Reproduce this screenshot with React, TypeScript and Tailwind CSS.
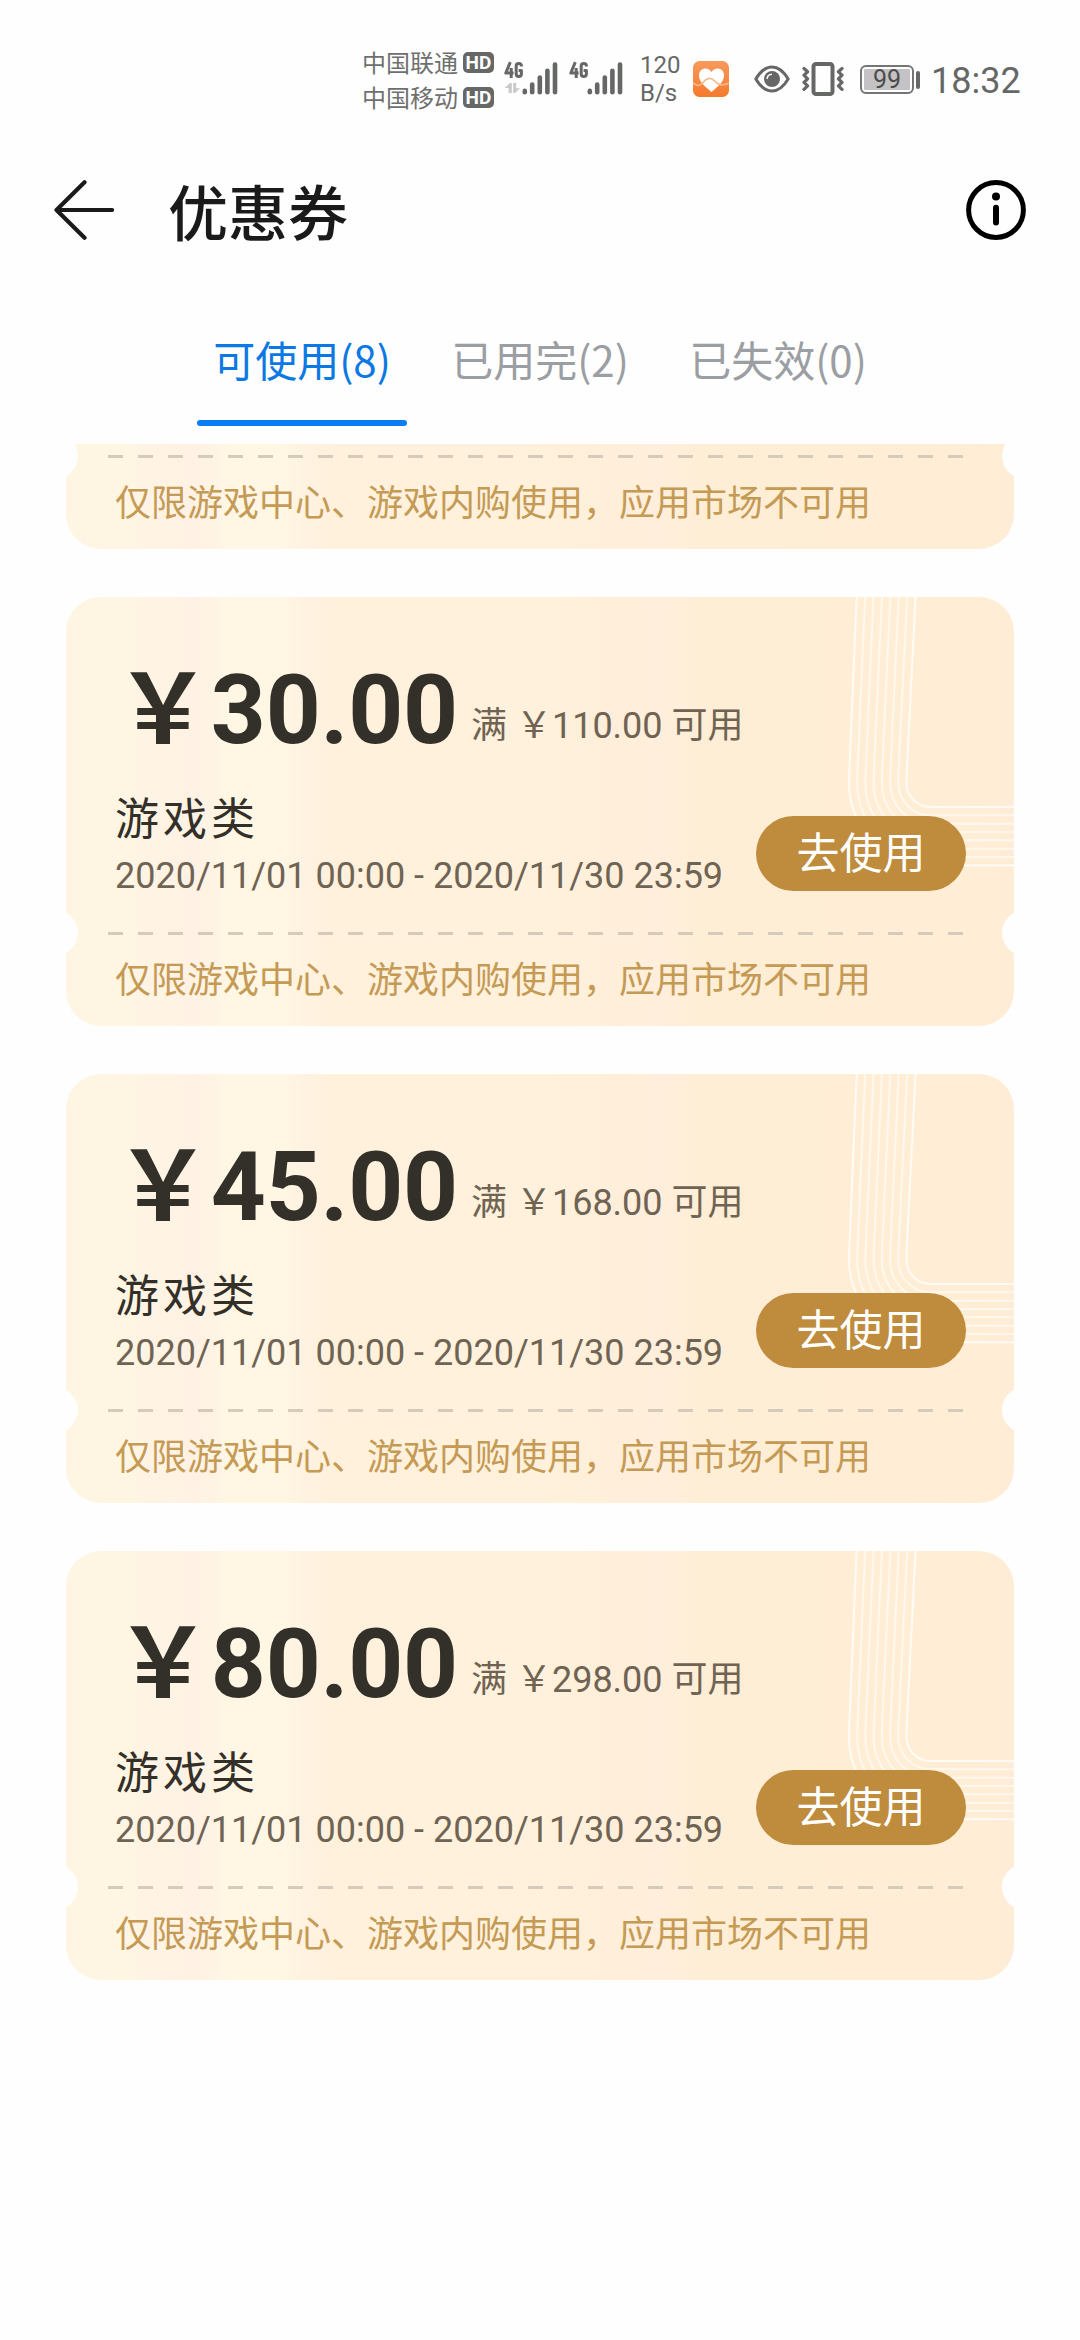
import React from "react";

const NOTE = "仅限游戏中心、游戏内购使用，应用市场不可用";

const coupons = [
  { amount: "30.00", min: "110.00" },
  { amount: "45.00", min: "168.00" },
  { amount: "80.00", min: "298.00" },
];

const tabs = [
  { label: "可使用(8)", active: true },
  { label: "已用完(2)", active: false },
  { label: "已失效(0)", active: false },
];

function HdBadge() {
  return (
    <span className="flex h-[21px] w-[31px] items-center justify-center rounded-[5px] bg-[#666866] font-['Roboto',sans-serif] text-[19px] leading-[21px] font-bold text-white">
      HD
    </span>
  );
}

function Carrier({ name }: { name: string }) {
  return (
    <div className="flex h-[35px] items-center gap-[5px]">
      <span className="-mt-[2px] w-[96px] text-[24px] leading-[35px] whitespace-nowrap text-[#6e706e]">{name}</span>
      <HdBadge />
    </div>
  );
}

function Signal({ data }: { data: boolean }) {
  return (
    <svg width="54" height="36" viewBox="0 0 54 36" className="shrink-0">
      <g fill="none" stroke="#666866" strokeWidth="3" strokeLinejoin="round">
        <path d="M6.3 1.2 L1.8 12 H9.6 M7.2 7 V17" />
        <path d="M17.4 5.6 V5 Q17.4 2.4 14.8 2.4 Q12.2 2.4 12.2 5 V13 Q12.2 15.6 14.8 15.6 Q17.4 15.6 17.4 13 V9.6 H14.6" />
      </g>
      {data && (
        <g fill="#c9c9c9">
          <path d="M0.5 27 L6 22 H7.8 V32 H4.6 V27 Z" />
          <path d="M9.2 22 H12.2 V27.2 H16 L11 32 H9.2 Z" />
        </g>
      )}
      <g stroke="#666866" strokeWidth="4.6" strokeLinecap="round">
        <path d="M20.8 29.9V31.2" />
        <path d="M28.2 23.6V31.2" />
        <path d="M35.8 16.6V31.2" />
        <path d="M43.4 9.8V31.2" />
        <path d="M51 3.6V31.2" />
      </g>
    </svg>
  );
}

function HealthIcon() {
  return (
    <svg width="36" height="36" viewBox="0 0 36 36" className="shrink-0">
      <defs>
        <linearGradient id="health" x1="0" y1="0" x2="0" y2="1">
          <stop offset="0" stopColor="#f79a5c" />
          <stop offset="1" stopColor="#f57a2c" />
        </linearGradient>
      </defs>
      <rect width="36" height="36" rx="6.5" fill="url(#health)" />
      <path
        d="M18.5 31 C13 26 6 21.5 6 14.5 C6 10 9.2 7.5 12.5 7.5 C15 7.5 17.2 8.8 18.5 11 C19.8 8.8 22 7.5 24.8 7.5 C28.5 7.5 31 10.5 31 14.5 C31 21.5 24 26 18.5 31Z"
        fill="#fff"
      />
      <path d="M0 22 C4 25 7 25.5 10 21.5 C14 16.5 18 16 21.5 20 C25 24 30 25 36 22" fill="none" stroke="#f9b98c" strokeWidth="1.8" />
    </svg>
  );
}

function EyeIcon() {
  return (
    <svg width="36" height="28" viewBox="0 0 36 28" className="shrink-0">
      <path d="M1.8 14 Q9 2 18 2 Q27 2 34.2 14 Q27 26 18 26 Q9 26 1.8 14Z" fill="none" stroke="#666866" strokeWidth="3" strokeLinejoin="round" />
      <circle cx="18" cy="14" r="8" fill="#666866" />
      <path d="M13.2 14 Q13.2 9.3 18 9.2" fill="none" stroke="#fff" strokeWidth="1.6" />
    </svg>
  );
}

function VibrateIcon() {
  return (
    <svg width="42" height="34" viewBox="0 0 42 34" className="shrink-0" fill="none" stroke="#666866">
      <rect x="11.5" y="2" width="19" height="30" rx="2.5" strokeWidth="4" />
      <path d="M2 6.5 L5.6 9.8 L2 13.2 L5.6 16.8 L2 20.4 L5.6 23.8 L2 27.4" strokeWidth="3.2" strokeLinecap="round" strokeLinejoin="round" />
      <path d="M40 6.5 L36.4 9.8 L40 13.2 L36.4 16.8 L40 20.4 L36.4 23.8 L40 27.4" strokeWidth="3.2" strokeLinecap="round" strokeLinejoin="round" />
    </svg>
  );
}

function Battery() {
  return (
    <div className="flex items-center gap-[2px]">
      <div className="flex h-[29px] w-[54px] rounded-[6px] border-2 border-[#747674] p-[2px]">
        <div className="flex flex-1 items-center justify-center rounded-[1px] bg-[#c4c2c4] font-['Roboto',sans-serif] text-[25px] leading-[21px] text-[#4c4c4c]">
          99
        </div>
      </div>
      <div className="h-[18px] w-[4px] rounded-[2px] bg-[#666866]" />
    </div>
  );
}

function StatusBar() {
  return (
    <div className="flex h-[134px] items-start pt-[45px] pl-[362px]">
      <div>
        <Carrier name="中国联通" />
        <Carrier name="中国移动" />
      </div>
      <div className="mt-[16px] ml-[10px] flex gap-[11px]">
        <Signal data />
        <Signal data={false} />
      </div>
      <div className="mt-[6px] ml-[17px] w-[52px] font-['Roboto',sans-serif] text-[24px] leading-[28px] text-[#666866]">
        <div>120</div>
        <div>B/s</div>
      </div>
      <div className="mt-[16px] ml-px">
        <HealthIcon />
      </div>
      <div className="mt-[20px] ml-[25px]">
        <EyeIcon />
      </div>
      <div className="mt-[17px] ml-[12px]">
        <VibrateIcon />
      </div>
      <div className="mt-[20px] ml-[16px]">
        <Battery />
      </div>
      <div className="mt-[18px] ml-[11px] font-['Roboto',sans-serif] text-[36px] leading-[36px] text-[#666866]">18:32</div>
    </div>
  );
}

function Header() {
  return (
    <header className="flex h-[152px] items-center px-[54px]">
      <svg width="60" height="60" viewBox="0 0 60 60" fill="none" stroke="#1a1a1a" strokeWidth="4.2" strokeLinecap="round" strokeLinejoin="round">
        <path d="M30.5 2.3 L2.5 30 L30.5 57.7 M2.5 30 H58" />
      </svg>
      <h1 className="ml-[54px] flex-1 text-[60px] leading-[90px] font-medium text-[#1a1a1a]">优惠券</h1>
      <svg width="60" height="60" viewBox="0 0 60 60" fill="none" stroke="#000">
        <circle cx="30" cy="30" r="27.4" strokeWidth="5" />
        <circle cx="30" cy="16.5" r="4" fill="#000" stroke="none" />
        <path d="M30 27.8 V42.6" strokeWidth="6" strokeLinecap="round" />
      </svg>
    </header>
  );
}

function Tabs() {
  return (
    <nav className="flex h-[158px] justify-center gap-[28px]">
      {tabs.map((t) => (
        <div key={t.label} className="flex w-[210px] flex-col items-center">
          <span
            className={
              t.active
                ? "mt-[42px] text-[42px] leading-[62px] whitespace-nowrap text-[#0b78e3]"
                : "mt-[42px] text-[42px] leading-[62px] whitespace-nowrap text-[#9b9ea2]"
            }
          >
            {t.label}
          </span>
          {t.active && <span className="mt-[30px] h-[6px] w-full rounded-[3px] bg-[#0a7df5]" />}
        </div>
      ))}
    </nav>
  );
}

function CardLines() {
  return (
    <svg width="948" height="429" viewBox="0 0 948 429" className="absolute top-0 left-0" fill="none" stroke="#fff" strokeWidth="2">
      {Array.from({ length: 8 }, (_, i) => {
        const rx = 24 + i * 8.22;
        const ry = 24 + i * 8.33;
        const x = 864.5 - rx;
        return (
          <path
            key={i}
            strokeOpacity={i === 0 || i === 7 ? 0.75 : 0.6}
            d={`M${849.5 - i * 8.4} 0 L${x + 0.5} 170 Q${x} 178 ${x} 186 A${rx} ${ry} 0 0 0 864.5 ${186 + ry} H948`}
          />
        );
      })}
    </svg>
  );
}

function Notches() {
  return (
    <>
      <div className="absolute bottom-[70px] -left-[34px] size-[46px] rounded-full bg-[#fefefe]" />
      <div className="absolute -right-[34px] bottom-[70px] size-[46px] rounded-full bg-[#fefefe]" />
    </>
  );
}

function CardFooter() {
  return (
    <>
      <div className="flex h-[3px] gap-[15px] pl-[42px]">
        {Array.from({ length: 29 }, (_, i) => (
          <span key={i} className="h-[3px] w-[15px] bg-[#d6cabb]" />
        ))}
      </div>
      <p className="mt-[20px] pl-[49px] font-['Roboto','Noto_Sans_CJK_SC',sans-serif] text-[36px] leading-[52px] whitespace-nowrap text-[#c49a55]">
        {NOTE}
      </p>
    </>
  );
}

const CARD_FILL =
  "bg-[linear-gradient(90deg,#fff5e3_0%,#fff5e3_7%,#fff3e4_10%,#fff2e4_14%,#fff6e4_17%,#fff6e3_23%,#fff2e1_25%,#fff1dc_28%,#fff1db_50%,#ffefda_58%,#ffeedb_63%,#ffeed6_67%,#ffeed5_92%,#ffecd6_100%)]";

function CouponTail() {
  return (
    <article className={`relative h-[105px] w-[948px] overflow-hidden rounded-b-[35px] pt-[11px] ${CARD_FILL}`}>
      <Notches />
      <CardFooter />
    </article>
  );
}

function Coupon({ amount, min }: { amount: string; min: string }) {
  return (
    <article className={`relative h-[429px] w-[948px] overflow-hidden rounded-[35px] ${CARD_FILL}`}>
      <CardLines />
      <Notches />
      <div className="relative flex h-full flex-col font-['Roboto','Noto_Sans_CJK_SC',sans-serif]">
        <div className="flex h-[190px] items-start pt-[58px] pl-[49px] whitespace-nowrap">
          <span className="text-[96px] leading-[110px] font-bold tracking-[-0.2px] text-[#323029]">￥{amount}</span>
          <span className="mt-[45px] ml-[13px] text-[36px] leading-[52px] text-[#6f6354]">满 ￥{min} 可用</span>
        </div>
        <div className="flex h-[145px] justify-between pr-[48px] pl-[49px]">
          <div>
            <div className="text-[44px] leading-[66px] tracking-[4px] text-[#323029]">游戏类</div>
            <div className="text-[36px] leading-[46px] whitespace-nowrap text-[#6f6354]">2020/11/01 00:00 - 2020/11/30 23:59</div>
          </div>
          <button className="mt-[29px] h-[75px] w-[210px] rounded-full bg-[#bc8837]/97 text-[43px] leading-[76px] text-white">去使用</button>
        </div>
        <CardFooter />
      </div>
    </article>
  );
}

export default function App() {
  return (
    <div className="h-[2340px] w-[1080px] overflow-hidden bg-[#fefefe] font-['Noto_Sans_CJK_SC',sans-serif]">
      <StatusBar />
      <Header />
      <Tabs />
      <main className="flex flex-col items-center gap-[48px]">
        <CouponTail />
        {coupons.map((c) => (
          <Coupon key={c.amount} amount={c.amount} min={c.min} />
        ))}
      </main>
    </div>
  );
}
